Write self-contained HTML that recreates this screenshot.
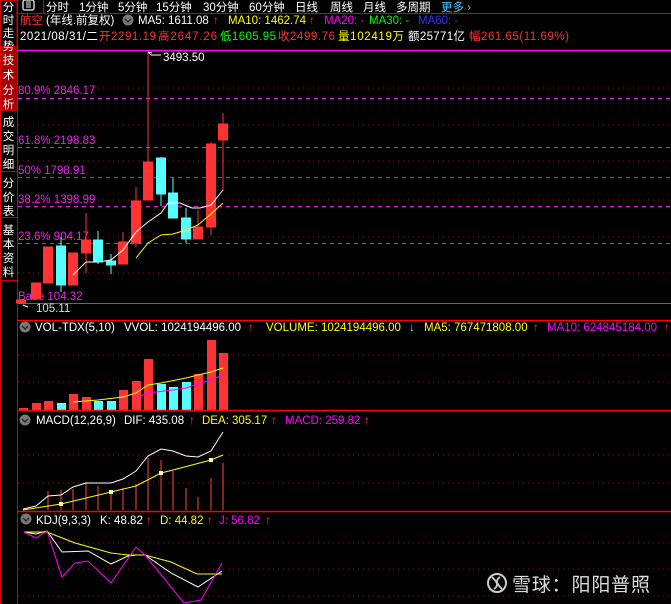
<!DOCTYPE html>
<html><head><meta charset="utf-8"><style>
html,body{margin:0;padding:0;background:#000;width:671px;height:604px;overflow:hidden}
svg{display:block}
text{font-family:"Liberation Sans","Noto Sans CJK SC",sans-serif;font-size:11.5px}
</style></head><body>
<svg width="671" height="604" viewBox="0 0 671 604" xmlns="http://www.w3.org/2000/svg">
<rect width="671" height="604" fill="#000"/>
<!-- sidebar -->
<rect x="0.5" y="0.5" width="16.5" height="46" fill="none" stroke="#c00" stroke-width="1"/>
<rect x="0" y="47" width="17" height="63" fill="#a80000"/>
<line x1="17.5" y1="0" x2="17.5" y2="604" stroke="#d00"/>
<line x1="0.5" y1="46" x2="0.5" y2="604" stroke="#d00"/>
<g stroke="#c00"><line x1="0" y1="110.5" x2="17" y2="110.5"/><line x1="0" y1="171.5" x2="17" y2="171.5"/><line x1="0" y1="217.5" x2="17" y2="217.5"/><line x1="0" y1="280.5" x2="17" y2="280.5"/></g>
<g fill="#fff" style="font-size:14px" text-anchor="middle">
<text x="8.5" y="11">分</text><text x="8.5" y="24">时</text><text x="8.5" y="37">走</text><text x="8.5" y="50">势</text>
<text x="8.5" y="64">技</text><text x="8.5" y="79">术</text><text x="8.5" y="94">分</text><text x="8.5" y="108">析</text>
<text x="8.5" y="126">成</text><text x="8.5" y="140">交</text><text x="8.5" y="154">明</text><text x="8.5" y="168">细</text>
<text x="8.5" y="187">分</text><text x="8.5" y="201">价</text><text x="8.5" y="215">表</text>
<text x="8.5" y="234">基</text><text x="8.5" y="248">本</text><text x="8.5" y="262">资</text><text x="8.5" y="276">料</text>
</g>
<!-- top bar -->
<line x1="17" y1="13.5" x2="671" y2="13.5" stroke="#d00"/>
<line x1="43.5" y1="0" x2="43.5" y2="13" stroke="#d00"/>
<rect x="23" y="0" width="11" height="10" rx="2" fill="none" stroke="#ccc" stroke-width="1.5"/>
<rect x="26" y="1" width="5" height="7" fill="#777"/>
<g fill="#fff" style="font-size:12px">
<text x="46" y="11">分时</text><text x="79" y="11">1分钟</text><text x="118" y="11">5分钟</text><text x="156" y="11">15分钟</text><text x="203" y="11">30分钟</text><text x="249" y="11">60分钟</text><text x="295" y="11">日线</text><text x="330" y="11">周线</text><text x="363" y="11">月线</text><text x="396" y="11">多周期</text>
<text x="441" y="11" fill="#4cf">更多 ›</text>
</g>
<!-- header rows -->
<text x="20" y="24" fill="#f33">航空</text>
<text x="46" y="24" fill="#fff">(年线.前复权)</text>
<circle cx="128" cy="20" r="5.5" fill="#777"/><path d="M125 19l3 3 3-3" stroke="#222" fill="none" stroke-width="1.3"/>
<text x="138" y="24" fill="#fff">MA5: 1611.08</text><text x="213" y="24" fill="#f33">↑</text>
<text x="228" y="24" fill="#ff0">MA10: 1462.74</text><text x="309" y="24" fill="#f33">↑</text>
<text x="324" y="24" fill="#f0f">MA20: -</text>
<text x="369" y="24" fill="#0f0">MA30: -</text>
<text x="418" y="24" fill="#33f">MA60: -</text>
<text x="20" y="40" fill="#fff" textLength="78">2021/08/31/二</text>
<text x="99" y="40" fill="#f33" textLength="57">开2291.19</text>
<text x="158" y="40" fill="#f33" textLength="59">高2647.26</text>
<text x="220" y="40" fill="#0f0" textLength="56">低1605.95</text>
<text x="278" y="40" fill="#f33" textLength="57">收2499.76</text>
<text x="338" y="40" fill="#ff0" textLength="66">量102419万</text>
<text x="408" y="40" fill="#fff" textLength="57">额25771亿</text>
<text x="469" y="40" fill="#f33" textLength="100">幅261.65(11.69%)</text>
<!-- main chart -->
<line x1="18" y1="50.5" x2="671" y2="50.5" stroke="#f0f" stroke-width="1.5"/>
<g stroke="#b00" stroke-dasharray="1 4"><line x1="18" y1="88" x2="671" y2="88"/><line x1="18" y1="125" x2="671" y2="125"/><line x1="18" y1="161" x2="671" y2="161"/><line x1="18" y1="200" x2="671" y2="200"/><line x1="18" y1="237" x2="671" y2="237"/><line x1="18" y1="273" x2="671" y2="273"/></g>
<g stroke="#f0f" stroke-dasharray="4 4"><line x1="18" y1="98.5" x2="671" y2="98.5"/><line x1="18" y1="147.5" x2="671" y2="147.5"/><line x1="18" y1="177.5" x2="671" y2="177.5"/><line x1="18" y1="206.5" x2="671" y2="206.5"/><line x1="18" y1="243.5" x2="671" y2="243.5"/></g>
<line x1="18" y1="303.5" x2="671" y2="303.5" stroke="#f0f"/>
<g fill="#e2e" style="font-size:11px">
<text x="18" y="94">80.9% 2846.17</text><text x="18" y="144">61.8% 2198.83</text><text x="18" y="174">50% 1798.91</text><text x="18" y="203">38.2% 1398.99</text><text x="18" y="240">23.6% 904.17</text><text x="18" y="300">Base 104.32</text>
</g>
<text x="36" y="312" fill="#ddd">105.11</text><path d="M23 305l5 2" stroke="#fff"/>
<!-- candles -->
<g stroke="#f33" fill="#f33">
<line x1="148" y1="51" x2="148" y2="200"/><rect x="143.5" y="162" width="9" height="38"/>
<rect x="16.5" y="300" width="9" height="3"/>
<rect x="31.5" y="283" width="9" height="16"/>
<rect x="43.5" y="247" width="9" height="36"/>
<rect x="68.5" y="253" width="9" height="32"/>
<line x1="86" y1="213" x2="86" y2="273"/><rect x="81.5" y="240" width="9" height="13"/>
<line x1="123" y1="232" x2="123" y2="264"/><rect x="118.5" y="242" width="9" height="22"/>
<line x1="136" y1="187" x2="136" y2="247"/><rect x="131.5" y="201" width="9" height="42"/>
<line x1="198" y1="210" x2="198" y2="239"/><rect x="193.5" y="227" width="9" height="12"/>
<line x1="211" y1="142" x2="211" y2="235"/><rect x="206.5" y="144" width="9" height="83"/>
<line x1="223" y1="113" x2="223" y2="191"/><rect x="218.5" y="124" width="9" height="16"/>
</g>
<g stroke="#5ff" fill="#5ff">
<line x1="61" y1="237" x2="61" y2="292"/><rect x="56.5" y="246" width="9" height="39"/>
<line x1="98" y1="231" x2="98" y2="264"/><rect x="93.5" y="240" width="9" height="22"/>
<line x1="111" y1="254" x2="111" y2="274"/><rect x="106.5" y="261" width="9" height="4"/>
<line x1="161" y1="157" x2="161" y2="206"/><rect x="156.5" y="158" width="9" height="36"/>
<line x1="173" y1="178" x2="173" y2="218"/><rect x="168.5" y="193" width="9" height="25"/>
<line x1="186" y1="208" x2="186" y2="243"/><rect x="181.5" y="218" width="9" height="21"/>
</g>
<polyline points="73,275 86,262 98,262 111,260 123,250 136,232 148,222 161,213 168,203 180,203 192,208 200,208 211,205 223,190" fill="none" stroke="#fff"/>
<polyline points="136,258 148,243 161,235 173,234 186,230 198,225 211,214 223,203" fill="none" stroke="#ff0"/>
<path d="M148 52l4 1 M148 52l3 3 M151 55l10 0" stroke="#fff" fill="none"/>
<text x="163" y="61" fill="#fff">3493.50</text>
<!-- VOL -->
<line x1="18" y1="320.5" x2="671" y2="320.5" stroke="#f00" stroke-width="1.5"/>
<circle cx="25" cy="327" r="5.5" fill="#777"/><path d="M22 326l3 3 3-3" stroke="#222" fill="none" stroke-width="1.3"/>
<text x="35" y="331" fill="#fff">VOL-TDX(5,10)</text>
<text x="124" y="331" fill="#fff">VVOL: 1024194496.00</text><text x="248" y="331" fill="#f33">↑</text>
<text x="266" y="331" fill="#ff0">VOLUME: 1024194496.00</text><text x="409" y="331" fill="#5ff">↓</text>
<text x="424" y="331" fill="#ff0">MA5: 767471808.00</text><text x="533" y="331" fill="#f33">↑</text>
<text x="547" y="331" fill="#f0f">MA10: 624845184.00</text><text x="664" y="331" fill="#f33">↑</text>
<g stroke="#b00" stroke-dasharray="1 4"><line x1="18" y1="355" x2="671" y2="355"/><line x1="18" y1="382" x2="671" y2="382"/></g>
<g fill="#f33">
<rect x="19" y="408" width="9" height="3"/><rect x="32" y="403" width="9" height="8"/><rect x="44" y="401" width="9" height="10"/><rect x="69" y="394" width="9" height="17"/><rect x="82" y="397" width="9" height="14"/><rect x="119" y="390" width="9" height="21"/><rect x="132" y="381" width="9" height="30"/><rect x="144" y="359" width="9" height="52"/><rect x="194" y="374" width="9" height="37"/><rect x="207" y="340" width="9" height="71"/><rect x="219" y="353" width="9" height="58"/>
</g>
<g fill="#5ff"><rect x="57" y="403" width="9" height="8"/><rect x="94" y="401" width="9" height="10"/><rect x="107" y="401" width="9" height="10"/><rect x="157" y="384" width="9" height="27"/><rect x="169" y="387" width="9" height="24"/><rect x="182" y="382" width="9" height="29"/></g>
<polyline points="73,402 98,400 123,397 136,393 148,385 161,383 186,378 198,375 211,372 223,368" fill="none" stroke="#ff0"/>
<polyline points="136,398 148,393 173,390 186,388 198,384 211,380 223,375" fill="none" stroke="#f0f"/>
<!-- MACD -->
<line x1="18" y1="410.5" x2="671" y2="410.5" stroke="#f00" stroke-width="1.5"/>
<circle cx="25" cy="420" r="5.5" fill="#777"/><path d="M22 419l3 3 3-3" stroke="#222" fill="none" stroke-width="1.3"/>
<text x="36" y="424" fill="#fff">MACD(12,26,9)</text>
<text x="124" y="424" fill="#fff">DIF: 435.08</text><text x="189" y="424" fill="#f33">↑</text>
<text x="202" y="424" fill="#ff0">DEA: 305.17</text><text x="271" y="424" fill="#f33">↑</text>
<text x="285" y="424" fill="#f0f">MACD: 259.82</text><text x="364" y="424" fill="#f33">↑</text>
<g stroke="#b00" stroke-dasharray="1 4"><line x1="18" y1="455" x2="671" y2="455"/><line x1="18" y1="483" x2="671" y2="483"/></g>
<g stroke="#f44">
<line x1="48" y1="491" x2="48" y2="510"/><line x1="61" y1="490" x2="61" y2="510"/><line x1="73" y1="489" x2="73" y2="510"/><line x1="86" y1="482" x2="86" y2="510"/><line x1="98" y1="486" x2="98" y2="510"/><line x1="111" y1="490" x2="111" y2="510"/><line x1="123" y1="488" x2="123" y2="510"/><line x1="136" y1="484" x2="136" y2="510"/><line x1="148" y1="458" x2="148" y2="510"/><line x1="161" y1="460" x2="161" y2="510"/><line x1="173" y1="471" x2="173" y2="510"/><line x1="186" y1="488" x2="186" y2="510"/><line x1="198" y1="497" x2="198" y2="510"/><line x1="211" y1="478" x2="211" y2="510"/><line x1="223" y1="463" x2="223" y2="510"/>
</g>
<polyline points="23,509 36,506 48,496 61,495 73,487 86,483 98,483 111,483 123,479 136,471 148,456 161,449 173,451 186,456 198,457 211,451 223,432" fill="none" stroke="#fff"/>
<polyline points="23,510 61,504 111,492 136,486 161,473 173,470 211,460 223,455" fill="none" stroke="#ff0"/>
<g fill="#ffc"><rect x="59" y="502" width="4" height="4"/><rect x="109" y="490" width="4" height="4"/><rect x="159" y="471" width="4" height="4"/><rect x="209" y="458" width="4" height="4"/></g>
<!-- KDJ -->
<line x1="18" y1="511.5" x2="671" y2="511.5" stroke="#f00" stroke-width="1.5"/>
<circle cx="26" cy="519" r="5.5" fill="#777"/><path d="M23 518l3 3 3-3" stroke="#222" fill="none" stroke-width="1.3"/>
<text x="36" y="524" fill="#fff">KDJ(9,3,3)</text>
<text x="100" y="524" fill="#fff">K: 48.82</text><text x="146" y="524" fill="#f33">↑</text>
<text x="160" y="524" fill="#ff0">D: 44.82</text><text x="207" y="524" fill="#f33">↑</text>
<text x="219" y="524" fill="#f0f">J: 56.82</text><text x="265" y="524" fill="#f33">↑</text>
<g stroke="#b00" stroke-dasharray="1 4"><line x1="18" y1="543" x2="671" y2="543"/><line x1="18" y1="569" x2="671" y2="569"/><line x1="18" y1="596" x2="671" y2="596"/></g>
<polyline points="24,532 36,534 47,531 62,552 88,551 111,564 128,556 137,555 145,555 171,573 198,587 222,571" fill="none" stroke="#fff"/>
<polyline points="24,532 47,532 75,543 111,553 128,555 145,555 171,562 197,574 222,574" fill="none" stroke="#ff0"/>
<polyline points="24,532 36,538 47,531 62,577 75,563 88,561 111,583 136,547 145,555 184,603 201,600 222,563" fill="none" stroke="#f0f"/>
<!-- watermark -->
<circle cx="497" cy="583" r="9" fill="none" stroke="#ccc" stroke-width="2"/>
<path d="M492 577c4 4 8 8 2 12 M502 589c-4-4-8-8-2-12" stroke="#ccc" fill="none" stroke-width="1.8"/>
<text x="512" y="591" fill="#ddd" style="font-size:19px" textLength="138">雪球：阳阳普照</text>
</svg>
</body></html>
